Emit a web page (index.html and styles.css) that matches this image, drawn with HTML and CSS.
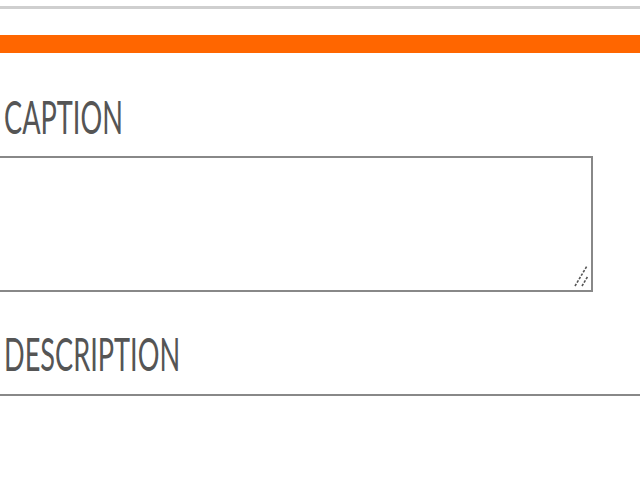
FILE: index.html
```html
<!DOCTYPE html>
<html lang="en">
<head>
    <meta charset="UTF-8">
    <meta name="viewport" content="width=device-width, initial-scale=1.0">
    <title>Media Details</title>
    <link rel="stylesheet" href="styles.css">
</head>
<body>
    <div class="top-rule"></div>
    <div class="accent-bar"></div>

    <!-- Media fields -->
    <form class="fields">
        <label class="field-label" for="caption"><span>CAPTION</span></label>
        <div class="textarea-wrap">
            <textarea id="caption"></textarea>
            <svg class="grip" width="16" height="22" viewBox="0 0 16 22">
                <line x1="2" y1="21" x2="14" y2="1" stroke="#555" stroke-width="1.6" stroke-dasharray="2.5 1.5"/>
                <line x1="9" y1="21" x2="15" y2="11" stroke="#555" stroke-width="1.6" stroke-dasharray="2.5 1.5"/>
            </svg>
        </div>

        <label class="field-label desc-label" for="description"><span>DESCRIPTION</span></label>
        <input type="text" id="description" class="desc-input">
    </form>
</body>
</html>
```

FILE: styles.css
```css
/* General Styles */
body {
    margin: 0;
    padding: 0;
    background: #fff;
    font-family: 'Lato', 'Open Sans', sans-serif;
    color: #555;
    overflow: hidden;
}
.top-rule {
    margin-top: 6px;
    height: 3px;
    background: #cfcfcf;
}
.accent-bar {
    margin-top: 26px;
    height: 18px;
    background: #ff6600;
}

/* Fields */
.fields {
    margin-left: -12px;
    padding-top: 41px;
}
.field-label {
    display: block;
    padding-left: 16px;
    font-size: 46px;
    line-height: 46px;
    height: 46px;
    white-space: nowrap;
}
.field-label span {
    display: inline-block;
    transform: scaleX(0.59);
    transform-origin: left center;
}
.desc-label {
    margin-top: 39px;
}
.textarea-wrap {
    position: relative;
    width: 605px;
    margin-top: 16px;
}
.textarea-wrap textarea {
    display: block;
    box-sizing: border-box;
    width: 100%;
    height: 136px;
    border: 2px solid #888;
    border-radius: 0;
    resize: none;
    outline: none;
    margin: 0;
}
.grip {
    position: absolute;
    right: 4px;
    bottom: 5px;
}
.desc-input {
    display: block;
    box-sizing: border-box;
    width: calc(100% + 12px);
    margin-top: 17px;
    height: 40px;
    border: 0;
    border-top: 2px solid #888;
    border-radius: 0;
    outline: none;
}
```
